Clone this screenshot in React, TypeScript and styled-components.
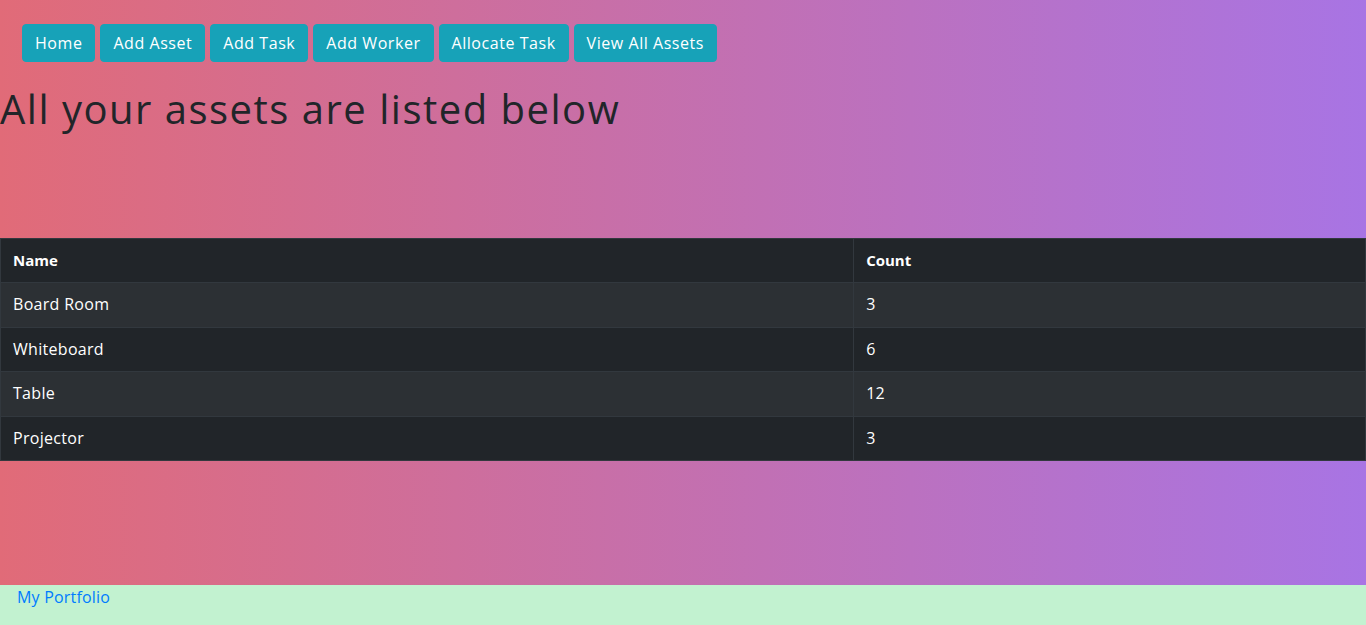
import React from "react";
import styled, { createGlobalStyle } from "styled-components";

const Global = createGlobalStyle`
  html, body { margin: 0; padding: 0; }
  body {
    font-family: "Open Sans", "Noto Sans", sans-serif;
    font-size: 16px;
    color: #212529;
  }
  * { box-sizing: border-box; }
`;

const Page = styled.div`
  display: flex;
  flex-direction: column;
  height: 100vh;
`;

const Main = styled.main`
  flex: 1;
  background: linear-gradient(to right, #e16b78, #a874e4);
  display: flex;
  flex-direction: column;
`;

const Nav = styled.nav`
  display: flex;
  gap: 5px;
  padding: 24px 0 0 22px;
`;

const NavButton = styled.a`
  display: inline-block;
  background: #17a2b8;
  border: 1px solid #17a2b8;
  border-radius: 4px;
  color: #fff;
  padding: 6px 12px;
  line-height: 24px;
  font-size: 16px;
  letter-spacing: 0.55px;
  text-decoration: none;
  cursor: pointer;
`;

const Title = styled.h1`
  margin: 23px 0 0;
  font-size: 40px;
  font-weight: 400;
  letter-spacing: 1.5px;
  line-height: 48px;
  color: #212529;
`;

const Table = styled.table`
  margin-top: 105px;
  width: 100%;
  border-collapse: collapse;
  background: #212529;
  color: #fff;
  font-size: 16px;
  letter-spacing: 0.3px;
`;

const Row = styled.tr<{ $striped?: boolean }>`
  background: ${(p) => (p.$striped ? "#2c3034" : "#212529")};
`;

const Th = styled.th<{ $w?: string }>`
  text-align: left;
  font-weight: 700;
  font-size: 15px;
  letter-spacing: 0;
  padding: 10px 12px;
  line-height: 23.4px;
  border: 1px solid #32383e;
  width: ${(p) => p.$w || "auto"};
`;

const Td = styled.td`
  padding: 10px 12px;
  line-height: 23.4px;
  border: 1px solid #32383e;
`;

const Footer = styled.footer`
  height: 40px;
  background: #c2f2d0;
  padding-left: 17px;
`;

const FooterLink = styled.a`
  color: #007bff;
  text-decoration: none;
  line-height: 24px;
  font-size: 16px;
  letter-spacing: 0.2px;
`;

const buttons = ["Home", "Add Asset", "Add Task", "Add Worker", "Allocate Task", "View All Assets"];
const assets = [
  { name: "Board Room", count: 3 },
  { name: "Whiteboard", count: 6 },
  { name: "Table", count: 12 },
  { name: "Projector", count: 3 },
];

export default function App() {
  return (
    <Page>
      <Global />
      <Main>
        <Nav>
          {buttons.map((b) => (
            <NavButton key={b}>{b}</NavButton>
          ))}
        </Nav>
        <Title>All your assets are listed below</Title>
        <Table>
          <thead>
            <Row>
              <Th $w="62.5%">Name</Th>
              <Th>Count</Th>
            </Row>
          </thead>
          <tbody>
            {assets.map((a, i) => (
              <Row key={a.name} $striped={i % 2 === 0}>
                <Td>{a.name}</Td>
                <Td>{a.count}</Td>
              </Row>
            ))}
          </tbody>
        </Table>
      </Main>
      <Footer>
        <FooterLink href="#">My Portfolio</FooterLink>
      </Footer>
    </Page>
  );
}
